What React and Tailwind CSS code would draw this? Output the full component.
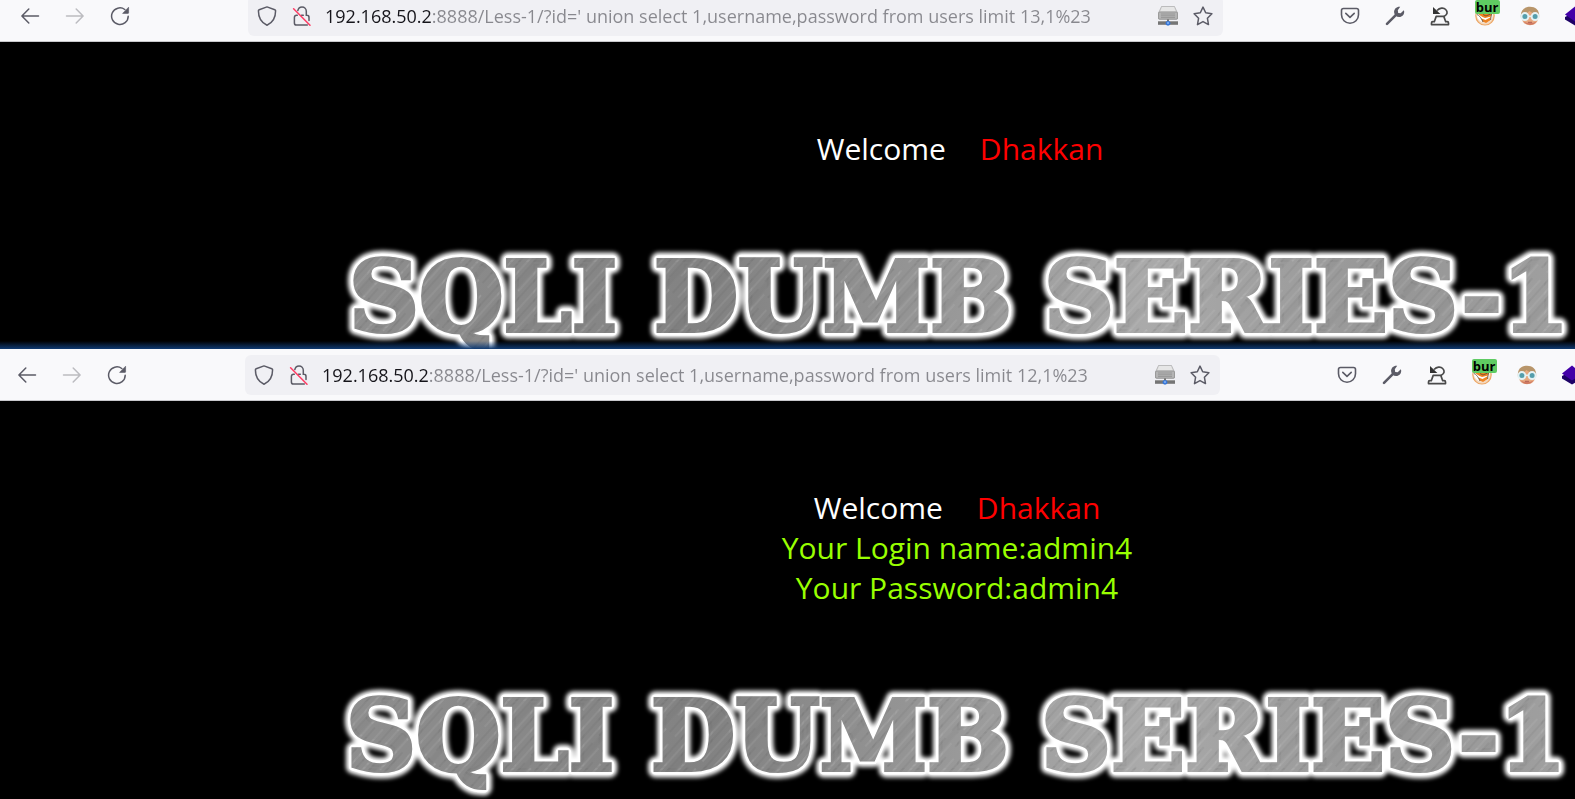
import React from "react";

const FONT = "font-['Open_Sans','Noto_Sans',sans-serif]";

function BackIcon({ className }) {
  return (
    <svg viewBox="0 0 20 20" className={`size-5 ${className}`} fill="none" stroke="currentColor" strokeWidth="1.500" strokeLinecap="round" strokeLinejoin="round" aria-hidden="true">
      <path d="M18.500 10H2M8.800 3 1.900 10l6.900 7" />
    </svg>
  );
}

function ReloadIcon() {
  return (
    <svg viewBox="0 0 20 20" className="size-5" fill="none" aria-hidden="true">
      <path d="M18.200 10.200A8.300 8.300 0 1 1 14.800 3.500" stroke="#5b5b66" strokeWidth="1.500" strokeLinecap="round" />
      <path d="M18.600 1.200v5.600a.6.6 0 0 1-.6.6h-5.400z" fill="#5b5b66" stroke="#5b5b66" strokeWidth=".6" strokeLinejoin="round" />
    </svg>
  );
}

function ShieldIcon() {
  return (
    <svg viewBox="0 0 20 20" className="size-5" fill="none" stroke="#5b5b66" strokeWidth="1.500" strokeLinejoin="round" aria-hidden="true">
      <path d="M10 .9 17.800 3.700q.8.3.8 1.100C18.600 11.800 15.800 16.700 10 19.200 4.200 16.700 1.400 11.800 1.400 4.800q0-.8.8-1.100z" />
    </svg>
  );
}

function InsecureIcon() {
  return (
    <svg viewBox="0 0 20 20" className="size-5" fill="none" strokeLinecap="round" aria-hidden="true">
      <path d="M5.800 4.600C6.300 2.300 7.900.9 10 .9c2.500 0 4.300 1.900 4.300 4.400v4h.6c1.300 0 2.100.8 2.100 2.100v3.200M9.500 9.300h1.800M5.300 9.300H4.500c-1.300 0-2.100.8-2.100 2.100v5.600c0 1.300.8 2.100 2.100 2.100h10.800" stroke="#5b5b66" strokeWidth="1.500" />
      <path d="M1.600 2.800 18 19.200" stroke="#ff3b64" strokeWidth="1.500" />
    </svg>
  );
}

function DriveIcon() {
  return (
    <svg viewBox="0 0 20 20" className="size-5" aria-hidden="true">
      <path d="M3.500.5h13L19.500 7v6h-19V7z" fill="#d2d2d2" stroke="#a2a2a2" strokeWidth=".6" />
      <path d="M4 1h12l1.500 4h-15z" fill="#e6e6e6" />
      <rect x=".5" y="6" width="19" height="7.300" rx="1.200" fill="#b4b4b4" stroke="#8d8d8d" strokeWidth=".7" />
      <path d="M3 8h14M3 9.800h14M3 11.600h14" stroke="#8c8c8c" strokeWidth=".7" />
      <path d="M9 13.300h2v3H9z" fill="#777" />
      <rect x="0" y="15" width="20" height="3.800" fill="#757575" />
      <path d="M0 15h20v1H0z" fill="#999" />
      <circle cx="10" cy="17.300" r="2.400" fill="#3877d8" />
      <circle cx="10" cy="16.900" r="1" fill="#86b5f5" />
    </svg>
  );
}

function StarIcon() {
  return (
    <svg viewBox="0 0 20 20" className="size-5" fill="none" stroke="#5b5b66" strokeWidth="1.500" strokeLinejoin="round" aria-hidden="true">
      <path d="m10 1.100 2.700 5.700 6.200.9-4.500 4.500 1.100 6.400-5.500-3-5.500 3 1.100-6.400L1.100 7.700l6.200-.9z" />
    </svg>
  );
}

function PocketIcon() {
  return (
    <svg viewBox="0 0 20 20" className="size-5" fill="none" stroke="#5b5b66" strokeWidth="1.600" strokeLinecap="round" strokeLinejoin="round" aria-hidden="true">
      <path d="M3.500 2.500h13q2 0 2 2v4.300a8.500 8.500 0 0 1-17 0V4.500q0-2 2-2z" />
      <path d="m5.800 7.400 4.200 4 4.200-4" />
    </svg>
  );
}

function WrenchIcon() {
  return (
    <svg viewBox="0 0 20 20" className="size-5" aria-hidden="true">
      <path d="m2 17.800 8.500-8.500" stroke="#5b5b66" strokeWidth="2.600" strokeLinecap="round" />
      <path d="M15.200.8c-3.500-.4-6.300 2.200-6.100 5.500.2 2.800 2.400 4.900 5.200 4.800 2.800-.1 5-2.500 4.900-5.300 0-.6-.2-1.100-.4-1.600l-3.100 3-2.500-.3-.4-2.600z" fill="#5b5b66" />
    </svg>
  );
}

function CaptureIcon() {
  return (
    <svg viewBox="0 0 20 20" className="size-5" fill="none" stroke="#4a4a4a" strokeWidth="1.700" strokeLinejoin="round" aria-hidden="true">
      <path d="M1.500 18.600v-1.600q0-1.300 1.300-1.300h1.500l1.900-5.300h7.600l1.900 5.300h1.500q1.300 0 1.300 1.300v1.600z" />
      <path d="M7 4.500c2.700-2.700 6.500-3.300 8.700-1 2.200 2.200 2 5-1.700 7" />
      <path d="M3 .9v7.200h7.400z" fill="#333" stroke="none" />
    </svg>
  );
}

function FoxIcon() {
  return (
    <svg viewBox="0 0 20 20" className="size-5" aria-hidden="true">
      <circle cx="10" cy="9.800" r="9.200" fill="#f3d9bf" stroke="#eda765" strokeWidth="1.200" />
      <path d="M3 4h14l-.5 7-5.500 2.500L4.500 10z" fill="#f0821e" />
      <path d="M1.500 8c3 .5 5 3 8.500 4l6-1.500 1.500-3.500c.8 5-2 9-7 9.500C5.500 16.500 2 13 1.500 8z" fill="#fff" />
      <path d="m6.500 12.500 4 1.500 5.500-3-1 3.500-4 2.500-3.500-1.500z" fill="#ee8424" />
      <path d="M1.800 8.500c2 .3 3.700 3 4.700 4.500l1.500 3M8 8.500l3 1.500 4.500-2M16.500 8l-1 6" stroke="#5e4a3a" strokeWidth=".8" fill="none" />
    </svg>
  );
}

function FaceIcon() {
  return (
    <svg viewBox="0 0 20 20" className="size-5" aria-hidden="true">
      <path d="M1 12C-.2 5 4 .8 10 .8S20.200 5 19 12z" fill="#b8956a" />
      <path d="M2.300 8.500q5-.5 7-3.500 3.500 3 8.400 3.500v5c0 3-3.200 5.700-7.700 5.700s-7.700-2.700-7.700-5.700z" fill="#e8a980" />
      <path d="M3.500 15.500q2.500 3.500 6.500 3.500t6.500-3.500l-3 1.200h-7z" fill="#cf7a62" />
      <circle cx="4.900" cy="10.600" r="3.500" fill="#549eac" stroke="#e5f2f4" strokeWidth="2" />
      <circle cx="15.100" cy="10.600" r="3.500" fill="#549eac" stroke="#e5f2f4" strokeWidth="2" />
      <path d="M8.600 10.300h2.800" stroke="#e5f2f4" strokeWidth="1.400" />
      <path d="M8 16.300h4" stroke="#a54e48" strokeWidth=".8" />
    </svg>
  );
}

function LayersIcon() {
  return (
    <svg viewBox="0 0 20 20" className="size-5" aria-hidden="true">
      <path d="m0 11 10-5 10 5v2.500L10 19.500 0 13.500z" fill="#1d0266" />
      <path d="M10 .5 20 8.500l-10 7-10-7z" fill="#4300a8" />
    </svg>
  );
}

function ToolButton({ label, children }) {
  return (
    <button type="button" aria-label={label} className="flex h-10 w-[45px] shrink-0 items-center justify-center">
      {children}
    </button>
  );
}

function Toolbar({ url, clipped }) {
  return (
    <header className={`flex items-center overflow-hidden border-b border-[#c8c8cc] bg-[#f9f9fb] ${clipped ? "h-[42px] pb-[9px]" : "h-[52px] pt-px"}`}>
      <nav className={`flex shrink-0 ${clipped ? "w-[248px] pl-[7px]" : "w-[245px] pl-1"}`} aria-label="History">
        <ToolButton label="Back"><BackIcon className="text-[#5b5b66]" /></ToolButton>
        <ToolButton label="Forward"><BackIcon className="rotate-180 text-[#bcbcc0]" /></ToolButton>
        <ToolButton label="Reload"><ReloadIcon /></ToolButton>
      </nav>
      <div className="flex h-10 min-w-0 flex-1 items-center rounded-md bg-[#f0f0f4] pr-[10px] pl-[9px]">
        <ShieldIcon />
        <span className="ml-[15px] flex"><InsecureIcon /></span>
        <input
          type="text"
          aria-label="Address"
          defaultValue={url}
          className="ml-[13px] min-w-0 flex-1 bg-[linear-gradient(90deg,#15141a_106px,#88888e_106px)] bg-clip-text text-[18px] leading-6 text-transparent outline-none"
        />
        <button type="button" aria-label="Proxy"><DriveIcon /></button>
        <button type="button" aria-label="Bookmark" className="ml-[15px]"><StarIcon /></button>
      </div>
      <div className={`ml-[104px] flex shrink-0 overflow-hidden ${clipped ? "w-[248px]" : "w-[251px]"}`}>
        <ToolButton label="Pocket"><PocketIcon /></ToolButton>
        <ToolButton label="Tools"><WrenchIcon /></ToolButton>
        <ToolButton label="Capture"><CaptureIcon /></ToolButton>
        <ToolButton label="Proxy switch">
          <span className="relative flex">
            <FoxIcon />
            <span className="absolute -top-[6px] left-0 flex h-[14px] w-[25px] items-center justify-center rounded-[2px] bg-[#5fcb62] text-[13px] leading-[14px] font-bold text-black">bur</span>
          </span>
        </ToolButton>
        <ToolButton label="User agent"><FaceIcon /></ToolButton>
        <ToolButton label="Layers"><LayersIcon /></ToolButton>
      </div>
    </header>
  );
}

function Word({ x, children }) {
  return <text x={x} y="91">{children}</text>;
}

function Title({ id }) {
  const words = (
    <>
      <Word x="4">SQLI</Word>
      <Word x="309">DUMB</Word>
      <Word x="699">SERIES-1</Word>
    </>
  );
  return (
    <svg
      viewBox="0 0 1230 118"
      className="h-auto w-full overflow-visible font-['DejaVu_Serif',serif] text-[97px] font-bold"
      role="img"
      aria-label="SQLI DUMB SERIES-1"
      strokeLinejoin="round"
    >
      <defs>
        <linearGradient id={`${id}-steel`} gradientUnits="userSpaceOnUse" x1="0" y1="0" x2="1230" y2="0">
          <stop offset="0" stopColor="#8e8e8e" />
          <stop offset=".3" stopColor="#828282" />
          <stop offset=".5" stopColor="#999" />
          <stop offset=".65" stopColor="#aaa" />
          <stop offset=".85" stopColor="#969696" />
          <stop offset="1" stopColor="#a0a0a0" />
        </linearGradient>
        <pattern id={`${id}-brush`} width="37" height="60" patternUnits="userSpaceOnUse" patternTransform="rotate(42)">
          <path d="M2 0v60M15 0v42M27 10v50" stroke="#fff" strokeOpacity=".12" strokeWidth="1" />
          <path d="M7 0v50M20 14v46M33 0v60" stroke="#333" strokeOpacity=".12" strokeWidth="1" />
          <path d="M10 0v60" stroke="#444" strokeOpacity=".06" strokeWidth="5" />
        </pattern>
        <filter id={`${id}-glow`} x="-5%" y="-30%" width="110%" height="160%">
          <feGaussianBlur stdDeviation="2" />
        </filter>
      </defs>
      <g fill="#fff" stroke="#fff" strokeWidth="15" filter={`url(#${id}-glow)`}>{words}</g>
      <g fill="#fff" stroke="#fff" strokeWidth="9">{words}</g>
      <g fill={`url(#${id}-steel)`} stroke={`url(#${id}-steel)`} strokeWidth="4" strokeLinejoin="miter" aria-hidden="true">{words}</g>
      <g fill={`url(#${id}-brush)`} stroke={`url(#${id}-brush)`} strokeWidth="4" strokeLinejoin="miter" aria-hidden="true">{words}</g>
    </svg>
  );
}

function Greeting() {
  return (
    <p>
      <span className="text-white">Welcome</span>
      <span className="ml-[34px] text-[#ff0000]">Dhakkan</span>
    </p>
  );
}

export default function App() {
  return (
    <div className={`min-h-screen bg-black ${FONT}`}>
      <section className="relative h-[349px] overflow-hidden">
        <Toolbar clipped url="192.168.50.2:8888/Less-1/?id=' union select 1,username,password from users limit 13,1%23" />
        <main className="pt-[87px] pl-[345px]">
          <div className="text-center text-[30px] leading-10">
            <Greeting />
          </div>
          <div className="mt-[71px]"><Title id="first" /></div>
        </main>
        <div className="absolute inset-x-0 bottom-0 h-2 bg-linear-to-b from-transparent to-[#0f3a72]" />
      </section>
      <section>
        <Toolbar url="192.168.50.2:8888/Less-1/?id=' union select 1,username,password from users limit 12,1%23" />
        <main className="pt-[87px] pl-[339px]">
          <div className="text-center text-[30px] leading-10">
            <Greeting />
            <p className="text-[#99ff00]">Your Login name:admin4</p>
            <p className="text-[#99ff00]">Your Password:admin4</p>
          </div>
          <div className="mt-[71px] px-[3px]"><Title id="second" /></div>
        </main>
      </section>
    </div>
  );
}
